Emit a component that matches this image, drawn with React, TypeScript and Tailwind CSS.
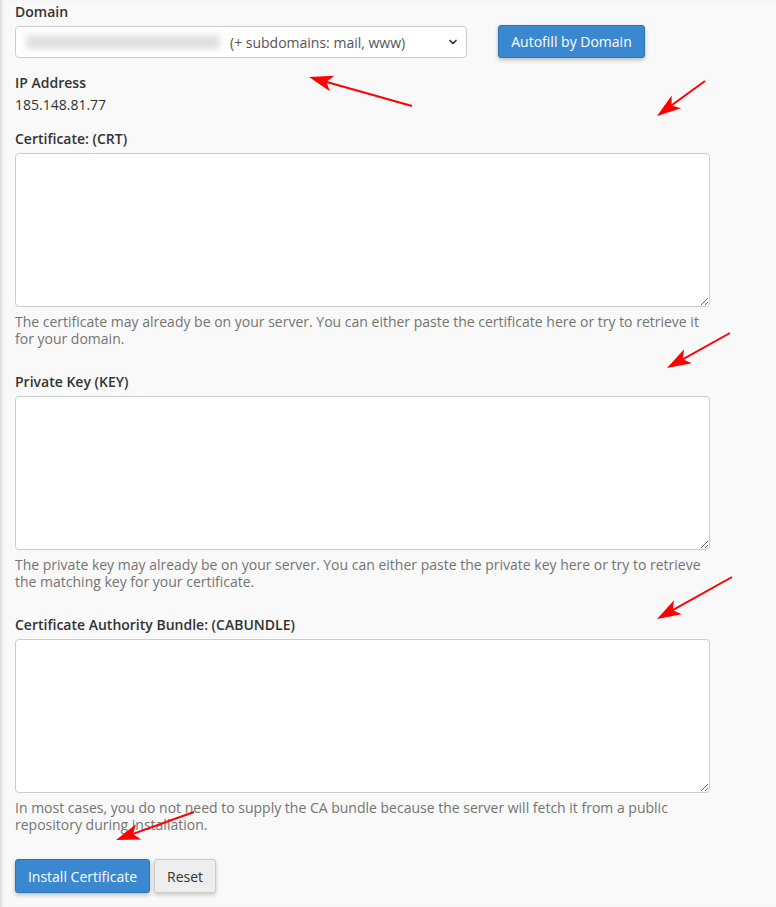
import { ChevronDown } from 'lucide-react'

type Arrow = { x1: number; y1: number; x2: number; y2: number }

const arrows: Arrow[] = [
  { x1: 412, y1: 106, x2: 309, y2: 77 },
  { x1: 705, y1: 81, x2: 657, y2: 116 },
  { x1: 730, y1: 333, x2: 667, y2: 368 },
  { x1: 732, y1: 577, x2: 657, y2: 619 },
  { x1: 194, y1: 812, x2: 116, y2: 840 },
]

function arrowHead({ x1, y1, x2, y2 }: Arrow) {
  const dx = x2 - x1
  const dy = y2 - y1
  const len = Math.hypot(dx, dy)
  const ux = dx / len
  const uy = dy / len
  const L = 24
  const W = 8
  const bx = x2 - ux * L
  const by = y2 - uy * L
  const mx = x2 - ux * (L - 6)
  const my = y2 - uy * (L - 6)
  return [
    `${x2},${y2}`,
    `${bx - uy * W},${by + ux * W}`,
    `${mx},${my}`,
    `${bx + uy * W},${by - ux * W}`,
  ].join(' ')
}

function Field({ label, help }: { label: string; help: string }) {
  return (
    <div>
      <div className="h-5 font-semibold leading-5">{label}</div>
      <textarea className="mt-[4px] block h-[154px] w-[695px] resize-y rounded-[4px] border border-[#cccccc] bg-white" />
      <p className="mt-[6px] w-[700px] text-[14px] leading-[17px] text-[#747474]">{help}</p>
    </div>
  )
}

export default function App() {
  return (
    <div
      className="relative min-h-[907px] w-[776px] bg-[#f9f9f9] px-[15px] pt-[2px] text-[14px] text-[#333333] shadow-[inset_3px_0_3px_-1px_rgba(0,0,0,0.12)]"
      style={{ fontFamily: '"Open Sans", "Noto Sans", sans-serif' }}
    >
      <div className="h-5 font-semibold leading-5">Domain</div>
      <div className="mt-[3px] flex items-start">
        <div className="mt-[1px] flex h-[32px] w-[452px] items-center rounded-[4px] border border-[#cccccc] bg-white pl-[10px] pr-[7px]">
          <span className="h-[14px] w-[194px] rounded-sm bg-[#e0e0e0] blur-[3px]" />
          <span className="ml-[10px] flex-1 text-[14px] text-[#555555]">(+ subdomains: mail, www)</span>
          <ChevronDown className="h-[12px] w-[12px] text-[#333333]" strokeWidth={3.5} />
        </div>
        <button className="ml-[31px] h-[33px] w-[147px] rounded-[3px] border border-[#2f73b4] bg-[#3a88d0] text-[14px] text-white shadow-[0_2px_4px_rgba(0,0,0,0.25)]">
          Autofill by Domain
        </button>
      </div>

      <div className="mt-[15px] h-5 font-semibold leading-5">IP Address</div>
      <div className="mt-[2px] h-5 leading-5">185.148.81.77</div>

      <div className="mt-[14px]">
        <Field
          label="Certificate: (CRT)"
          help="The certificate may already be on your server. You can either paste the certificate here or try to retrieve it for your domain."
        />
      </div>
      <div className="mt-[25px]">
        <Field
          label="Private Key (KEY)"
          help="The private key may already be on your server. You can either paste the private key here or try to retrieve the matching key for your certificate."
        />
      </div>
      <div className="mt-[25px]">
        <Field
          label="Certificate Authority Bundle: (CABUNDLE)"
          help="In most cases, you do not need to supply the CA bundle because the server will fetch it from a public repository during installation."
        />
      </div>

      <div className="mt-[26px] flex gap-[4px]">
        <button className="h-[34px] w-[135px] rounded-[3px] border border-[#2f73b4] bg-[#3a88d0] text-[14px] text-white shadow-[0_2px_4px_rgba(0,0,0,0.25)]">
          Install Certificate
        </button>
        <button className="h-[34px] w-[62px] rounded-[3px] border border-[#cccccc] bg-[#eeeeee] text-[14px] text-[#333333] shadow-[0_2px_4px_rgba(0,0,0,0.2)]">
          Reset
        </button>
      </div>

      {/* red annotation arrows */}
      <svg className="pointer-events-none absolute left-0 top-0" width={776} height={907}>
        {arrows.map((a, i) => (
          <g key={i}>
            <line x1={a.x1} y1={a.y1} x2={a.x2 + (a.x1 - a.x2) * 0.12} y2={a.y2 + (a.y1 - a.y2) * 0.12} stroke="#ff0000" strokeWidth={2} />
            <polygon points={arrowHead(a)} fill="#ff0000" />
          </g>
        ))}
      </svg>
    </div>
  )
}
